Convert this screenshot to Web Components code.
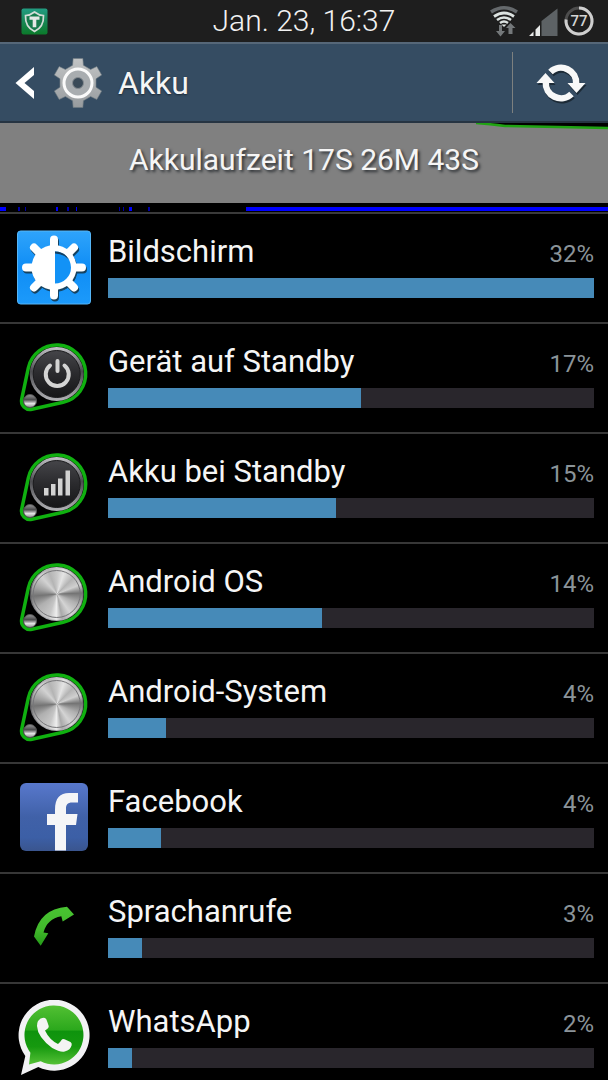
<!DOCTYPE html>
<html lang="de">
<head>
<meta charset="utf-8">
<meta name="viewport" content="width=device-width, initial-scale=1">
<title>Akku</title>
<style>
  body { margin: 0; background: #000; color: #f5f5f5; font-family: Roboto, "Noto Sans", sans-serif; }
</style>
</head>
<body>
<battery-screen></battery-screen>

<script>
const define = (name, html, init) => {
  const template = document.createElement('template');
  template.innerHTML = html;
  customElements.define(name, class extends HTMLElement {
    constructor() {
      super();
      this.attachShadow({ mode: 'open' }).append(template.content.cloneNode(true));
    }
    connectedCallback() { if (init) init.call(this); }
  });
};

/* Row icons, all drawn in a 76 x 76 box */
const knob = (face, glyph) => `
  <defs>
    <linearGradient id="rim" x1="0" y1="0" x2="0" y2="1"><stop offset="0" stop-color="#c4c4c8"/><stop offset=".45" stop-color="#4a4a4e"/><stop offset="1" stop-color="#b4b4b8"/></linearGradient>
    <linearGradient id="dark" x1="0" y1="0" x2="0" y2="1"><stop offset="0" stop-color="#454549"/><stop offset=".5" stop-color="#2a2a2d"/><stop offset="1" stop-color="#161618"/></linearGradient>
    <linearGradient id="ball" x1="0" y1="0" x2="0" y2="1"><stop offset="0" stop-color="#9a9a9c"/><stop offset=".4" stop-color="#4c4c4e"/><stop offset=".7" stop-color="#e6e6e6"/><stop offset="1" stop-color="#8a8a8c"/></linearGradient>
  </defs>
  <path d="M5.7 59.2L12.3 28A29 29 0 1 1 47.1 62.3L15.9 69.3A8.5 8.5 0 0 1 5.7 59.2Z" fill="#000" stroke="#10b010" stroke-width="3.500"/>
  <circle cx="40.7" cy="34" r="27" fill="url(#rim)"/>
  ${face}
  <circle cx="14" cy="61" r="6.5" fill="url(#ball)" stroke="#555"/>
  ${glyph}`;
const darkFace = '<circle cx="40.7" cy="34" r="23.500" fill="url(#dark)" stroke="#1b1b1d"/>';
const steelFace = `<foreignObject x="15" y="8" width="52" height="52"><div style="width:52px;height:52px;border-radius:50%;background:conic-gradient(#c8c8c8,#e4e4e4 18deg,#b4b4b4 45deg,#d0d0d0 68deg,#747474 88deg,#b0b0b0 115deg,#d4d4d4 145deg,#aaa 168deg,#eee 182deg,#c6c6c6 200deg,#b0b0b0 235deg,#747474 265deg,#a0a0a0 285deg,#d2d2d2 318deg,#b4b4b4 340deg,#c8c8c8)"></div></foreignObject>
  <circle cx="40.7" cy="34" r="23.5" fill="none" stroke="#77777a"/>`;

const ICONS = {
  display: `
    <defs><linearGradient id="sky" x1="0" y1="0" x2="0" y2="1"><stop offset="0" stop-color="#2fa4fb"/><stop offset=".5" stop-color="#0f8df5"/><stop offset="1" stop-color="#1c9afb"/></linearGradient></defs>
    <rect x="1.5" y="1" width="73" height="73" rx="3" fill="url(#sky)" stroke="#56b5f6"/>
    <g transform="translate(1 2)" stroke="#16425f" fill="#16425f"><path d="M38 9.500V65.500M10 37.500H66M18 17.500L58 57.500M58 17.500L18 57.500" stroke-width="8" stroke-linecap="round"/><circle cx="38" cy="37.500" r="22"/></g>
    <path d="M38 9.500V65.500M10 37.500H66M18 17.500L58 57.500M58 17.500L18 57.500" stroke="#fff" stroke-width="8" stroke-linecap="round"/>
    <circle cx="38" cy="37.500" r="22.500" fill="#fff"/>
    <path d="M39 21.500a16 16 0 0 1 0 32z" fill="#1292f6"/><path d="M39 21.500a16 16 0 0 1 14 8q-6-6-14-6z" fill="#143f60"/>`,
  power: knob(darkFace, `<path d="M34 25.500a11.500 11.500 0 1 0 14.500 0M41.500 21V31" fill="none" stroke="#d4d4d4" stroke-width="4" stroke-linecap="round"/>`),
  signal: knob(darkFace, `<path d="M28 38h4.500v7.500H28zM35 34h4.500v11.500H35zM42 28.500h4.500v17H42zM49.500 20.500H54v25h-4.500z" fill="#d2d2d2"/>`),
  steel: knob(steelFace, ''),
  facebook: `
    <defs><linearGradient id="fb" x1="0" y1="0" x2="0" y2="1"><stop offset="0" stop-color="#5878cc"/><stop offset=".5" stop-color="#4061a8"/><stop offset=".8" stop-color="#3c5fa6"/><stop offset="1" stop-color="#3a558e"/></linearGradient></defs>
    <rect x="4" y="3" width="68" height="68" rx="6" fill="url(#fb)"/>
    <path d="M39 70.500V45H31V34h8v-4C39 18 44 13 53 13h9v9.500h-5.500C51 22.500 50 25 50 29v5h11.500L60 45H50v25.500z" fill="#f5f5f7"/>`,
  phone: `
    <defs><linearGradient id="call" x1="0" y1="0" x2="0" y2="1"><stop offset="0" stop-color="#49c432"/><stop offset=".6" stop-color="#41b82b"/><stop offset="1" stop-color="#249a18"/></linearGradient></defs>
    <path d="M18 46.500L24.700 55.700L32.300 43.300L27.500 42.500Q31 29 45.300 26.300L46.700 31.500L58 24.500L51 16.700Q23 19 18 46.500z" fill="url(#call)"/>`,
  whatsapp: `
    <defs><linearGradient id="wa" x1="0" y1="0" x2="0" y2="1"><stop offset="0" stop-color="#52c033"/><stop offset=".42" stop-color="#2ba81c"/><stop offset=".43" stop-color="#0e930d"/><stop offset=".7" stop-color="#16990f"/><stop offset="1" stop-color="#55c136"/></linearGradient></defs>
    <path d="M9.300 56L5 75L22.300 67A35.500 35.500 0 1 0 9.300 56z" fill="#f2f2f4"/>
    <path d="M14.400 52.700L13 64.500L24.700 61.300A29.500 29.500 0 1 0 14.400 52.700z" fill="url(#wa)"/>
    <path d="M22 21q3-4 7-3q1.500.5 2.200 3.500l1.500 4.500q.5 2-3.700 4.500q4.500 9.500 13 13.500q2-1.500 3.500-4q1-1.500 3-.7l6 2.700q1.500.8 1.200 3q-1 5-7 6.500q-4.500 1-12.500-3.500Q21.500 37 21 26q0-3 1-5z" fill="#f4f4f4"/>`
};

define('status-bar', `
<style>
  :host { display: grid; grid-template-columns: 1fr auto 1fr; align-items: center; box-sizing: border-box; height: 44px; padding: 0 13px; background: #1e1e1e; border-bottom: 2px solid #566778; flex: none; }
  time { font-size: 30px; font-weight: 300; line-height: 42px; color: #f2f2f2; }
  .icons { display: flex; justify-content: flex-end; align-items: center; gap: 4px; }
  svg { display: block; }
  .shield { margin-left: 8px; }
  .pct { width: 32px; height: 32px; display: grid; place-items: center; }
  .pct > * { grid-area: 1 / 1; }
  .pct span { font-size: 15px; line-height: 16px; font-weight: 500; color: #d4d4d4; }
</style>
<svg class="shield" width="27" height="27" viewBox="0 0 27 27" role="img" aria-label="Schutz aktiv">
  <defs><linearGradient id="g" x1="0" y1="0" x2="0" y2="1"><stop stop-color="#229d82"/><stop offset=".5" stop-color="#198756"/><stop offset="1" stop-color="#0b7a2a"/></linearGradient></defs>
  <rect x=".5" y=".5" width="26" height="26" rx="2" fill="url(#g)"/>
  <path d="M13.500 4q4.500 3.500 9 3.500Q23 19 13.500 23.500Q4 19 4.500 7.500q4.500 0 9-3.500z" fill="#167b4d" stroke="#d4dcd8" stroke-width="1.700"/>
  <path d="M8.500 8.500h10v3.300h-3.200v7.400h-3.600v-7.400H8.500z" fill="#e4e8e6"/>
</svg>
<time datetime="16:37">Jan. 23, 16:37</time>
<div class="icons">
  <svg width="30" height="32" viewBox="0 0 30 32" role="img" aria-label="WLAN">
    <g fill="none">
      <path d="M2 7Q15-1.500 28 7" stroke="#65696c" stroke-width="3.500"/>
      <path d="M5 11.500Q15 4.500 25 11.500" stroke="#dce2e0" stroke-width="2.800"/>
      <path d="M8 15Q15 10 22 15" stroke="#dce2e0" stroke-width="2.600"/>
      <path d="M11 18Q15 15 19 18" stroke="#dce2e0" stroke-width="2.400"/>
    </g>
    <path d="M12.500 19.500h5L15 22z" fill="#dce2e0"/>
    <path d="M10 20h3v6h3l-4.500 5.500L7 26h3zM19.500 29h4v-6h3L21.500 18L17 23h2.500z" fill="#74787a"/>
  </svg>
  <svg width="36" height="32" viewBox="0 0 36 32" role="img" aria-label="Mobilfunk">
    <path d="M18.500 16L34.500 3.500V31h-16z" fill="#5d6265"/>
    <path d="M6 31L10.500 26.500V31zM12.500 24.500L17 20V31h-4.500z" fill="#e8eae9"/>
  </svg>
  <div class="pct">
    <svg width="32" height="32" viewBox="0 0 32 32" aria-hidden="true"><circle cx="16" cy="16" r="13" fill="none" stroke="#4d4d4d" stroke-width="3"/><path d="M16 3A13 13 0 1 1 3.100 14.500" fill="none" stroke="#cfcfcf" stroke-width="3"/></svg>
    <span>77</span>
  </div>
</div>`);

define('action-bar', `
<style>
  :host { display: flex; align-items: center; box-sizing: border-box; height: 79px; background: #354c62; border-bottom: 2px solid #263442; flex: none; }
  button { display: flex; align-items: center; height: 100%; margin: 0; border: 0; padding: 0; background: none; color: inherit; font: inherit; cursor: pointer; }
  .back { padding-left: 15px; gap: 18px; }
  h1 { flex: 1; margin: 0 0 0 15px; font-size: 32px; font-weight: 400; line-height: 40px; text-shadow: 0 1px 2px #1a2733; }
  .rule { width: 1px; height: 61px; background: #7d807f; }
  .refresh { width: 95px; justify-content: center; }
  svg { display: block; }
</style>
<button class="back" aria-label="Zurück">
  <svg width="20" height="34" viewBox="0 0 20 34"><path d="M19 1V9L9.500 17L19 25V33L0.500 17z" fill="#fff"/></svg>
  <svg width="50" height="52" viewBox="-25 -26 50 52">
    <defs><linearGradient id="m" x1="0" y1="0" x2="0" y2="1"><stop stop-color="#c2c4c5"/><stop offset="1" stop-color="#979b9e"/></linearGradient></defs>
    <path id="gear" fill="url(#m)" fill-rule="evenodd" stroke="#6f7a82" stroke-width=".6"/>
    <circle r="14" fill="#a9adb0" stroke="#fafafa" stroke-width="3"/>
    <circle r="5.500" fill="#3a4a58" stroke="#858b90"/>
  </svg>
</button>
<h1><slot></slot></h1>
<div class="rule"></div>
<button class="refresh" aria-label="Aktualisieren">
  <svg width="52" height="44" viewBox="-26 -22 52 44">
    <defs><g id="arr"><path d="M-10.500-11A15.200 15.200 0 0 1 15.200 1" fill="none" stroke-width="6.500"/><path d="M6.500 0H24.500L15.500 10z" stroke="none"/></g></defs>
    <g fill="#1c2a36" stroke="#1c2a36" transform="translate(1 2)"><use href="#arr"/><use href="#arr" transform="rotate(180)"/></g>
    <g fill="#f8f8f8" stroke="#f8f8f8"><use href="#arr"/><use href="#arr" transform="rotate(180)"/></g>
  </svg>
</button>`, function () {
  let d = '';
  for (let i = 0; i < 6; i++) {
    [[-17, 18.500], [-14, 25], [14, 25], [17, 18.500]].forEach(([off, r], k) => {
      const spread = k === 1 || k === 2 ? off * .8 : off;
      const a = (i * 60 - 90 + spread) * Math.PI / 180;
      d += (d ? 'L' : 'M') + (r * Math.cos(a)).toFixed(2) + ' ' + (r * Math.sin(a)).toFixed(2);
    });
  }
  this.shadowRoot.getElementById('gear').setAttribute('d', d + 'z');
});

define('battery-chart', `
<style>
  :host { display: block; flex: none; border-bottom: 2px solid #3a3a3a; }
  .level { display: grid; height: 80px; background: #808080; }
  .level > * { grid-area: 1 / 1; }
  svg { display: block; width: 100%; }
  p { margin: 0; padding-top: 17px; text-align: center; font-size: 30px; line-height: 40px; text-shadow: 2px 2px 3px #2c3034; }
</style>
<div class="level">
  <svg height="80" viewBox="0 0 608 80" preserveAspectRatio="none" aria-hidden="true">
    <path d="M478 0H608V5L510 3z" fill="#000"/>
    <path d="M476 0Q490 1 505 3Q560 4 608 5" fill="none" stroke="#1fa312" stroke-width="2.500"/>
  </svg>
  <p><slot></slot></p>
</div>
<svg height="9" viewBox="0 0 608 9" preserveAspectRatio="none" aria-hidden="true">
  <path d="M0 4H6V8H0zM56 4h2v4h-2zM76 4h1v4h-1zM129 4h3v4h-3zM246 4H608V8H246z" fill="#00f"/>
  <path d="M18 4h2v4h-2zM25 4h1v4h-1zM67 4h2v4h-2zM119 4h1v4h-1zM123 4h1v4h-1zM148 4h2v4h-2z" fill="#0000a8"/>
</svg>`);

define('usage-row', `
<style>
  :host { display: grid; grid-template-columns: 76px 1fr; column-gap: 16px; box-sizing: border-box; height: 110px; padding: 0 14px 0 16px; border-bottom: 2px solid #373737; }
  .icon { align-self: center; }
  svg { display: block; }
  .head { display: flex; justify-content: space-between; align-items: baseline; padding-top: 18px; line-height: 40px; }
  .name { font-size: 31px; }
  .pct { font-size: 24px; color: #8b9499; }
  .track { height: 20px; margin-top: 4px; background: #29262c; }
  .fill { height: 100%; background: #468ab8; }
</style>
<svg class="icon" width="76" height="76" viewBox="0 0 76 76" aria-hidden="true"></svg>
<div>
  <div class="head"><span class="name"><slot></slot></span><span class="pct"></span></div>
  <div class="track" role="progressbar" aria-valuemin="0" aria-valuemax="100"><div class="fill"></div></div>
</div>`, function () {
  const root = this.shadowRoot;
  root.querySelector('.icon').innerHTML = ICONS[this.getAttribute('icon')];
  root.querySelector('.pct').textContent = this.getAttribute('percent') + '%';
  const track = root.querySelector('.track');
  track.setAttribute('aria-valuenow', this.getAttribute('percent'));
  track.setAttribute('aria-label', this.textContent);
  root.querySelector('.fill').style.width = this.getAttribute('bar') + '%';
});

define('battery-screen', `
<style>
  :host { display: flex; flex-direction: column; height: 100vh; overflow: hidden; background: #000; }
  .list { flex: 1; min-height: 0; overflow-y: auto; scrollbar-width: none; }
</style>
<status-bar></status-bar>
<action-bar>Akku</action-bar>
<battery-chart>Akkulaufzeit 17S 26M 43S</battery-chart>
<div class="list" role="list">
  <usage-row role="listitem" icon="display" percent="32" bar="100">Bildschirm</usage-row>
  <usage-row role="listitem" icon="power" percent="17" bar="52">Gerät auf Standby</usage-row>
  <usage-row role="listitem" icon="signal" percent="15" bar="47">Akku bei Standby</usage-row>
  <usage-row role="listitem" icon="steel" percent="14" bar="44">Android OS</usage-row>
  <usage-row role="listitem" icon="steel" percent="4" bar="12">Android-System</usage-row>
  <usage-row role="listitem" icon="facebook" percent="4" bar="11">Facebook</usage-row>
  <usage-row role="listitem" icon="phone" percent="3" bar="7">Sprachanrufe</usage-row>
  <usage-row role="listitem" icon="whatsapp" percent="2" bar="5">WhatsApp</usage-row>
</div>`);
</script>
</body>
</html>
